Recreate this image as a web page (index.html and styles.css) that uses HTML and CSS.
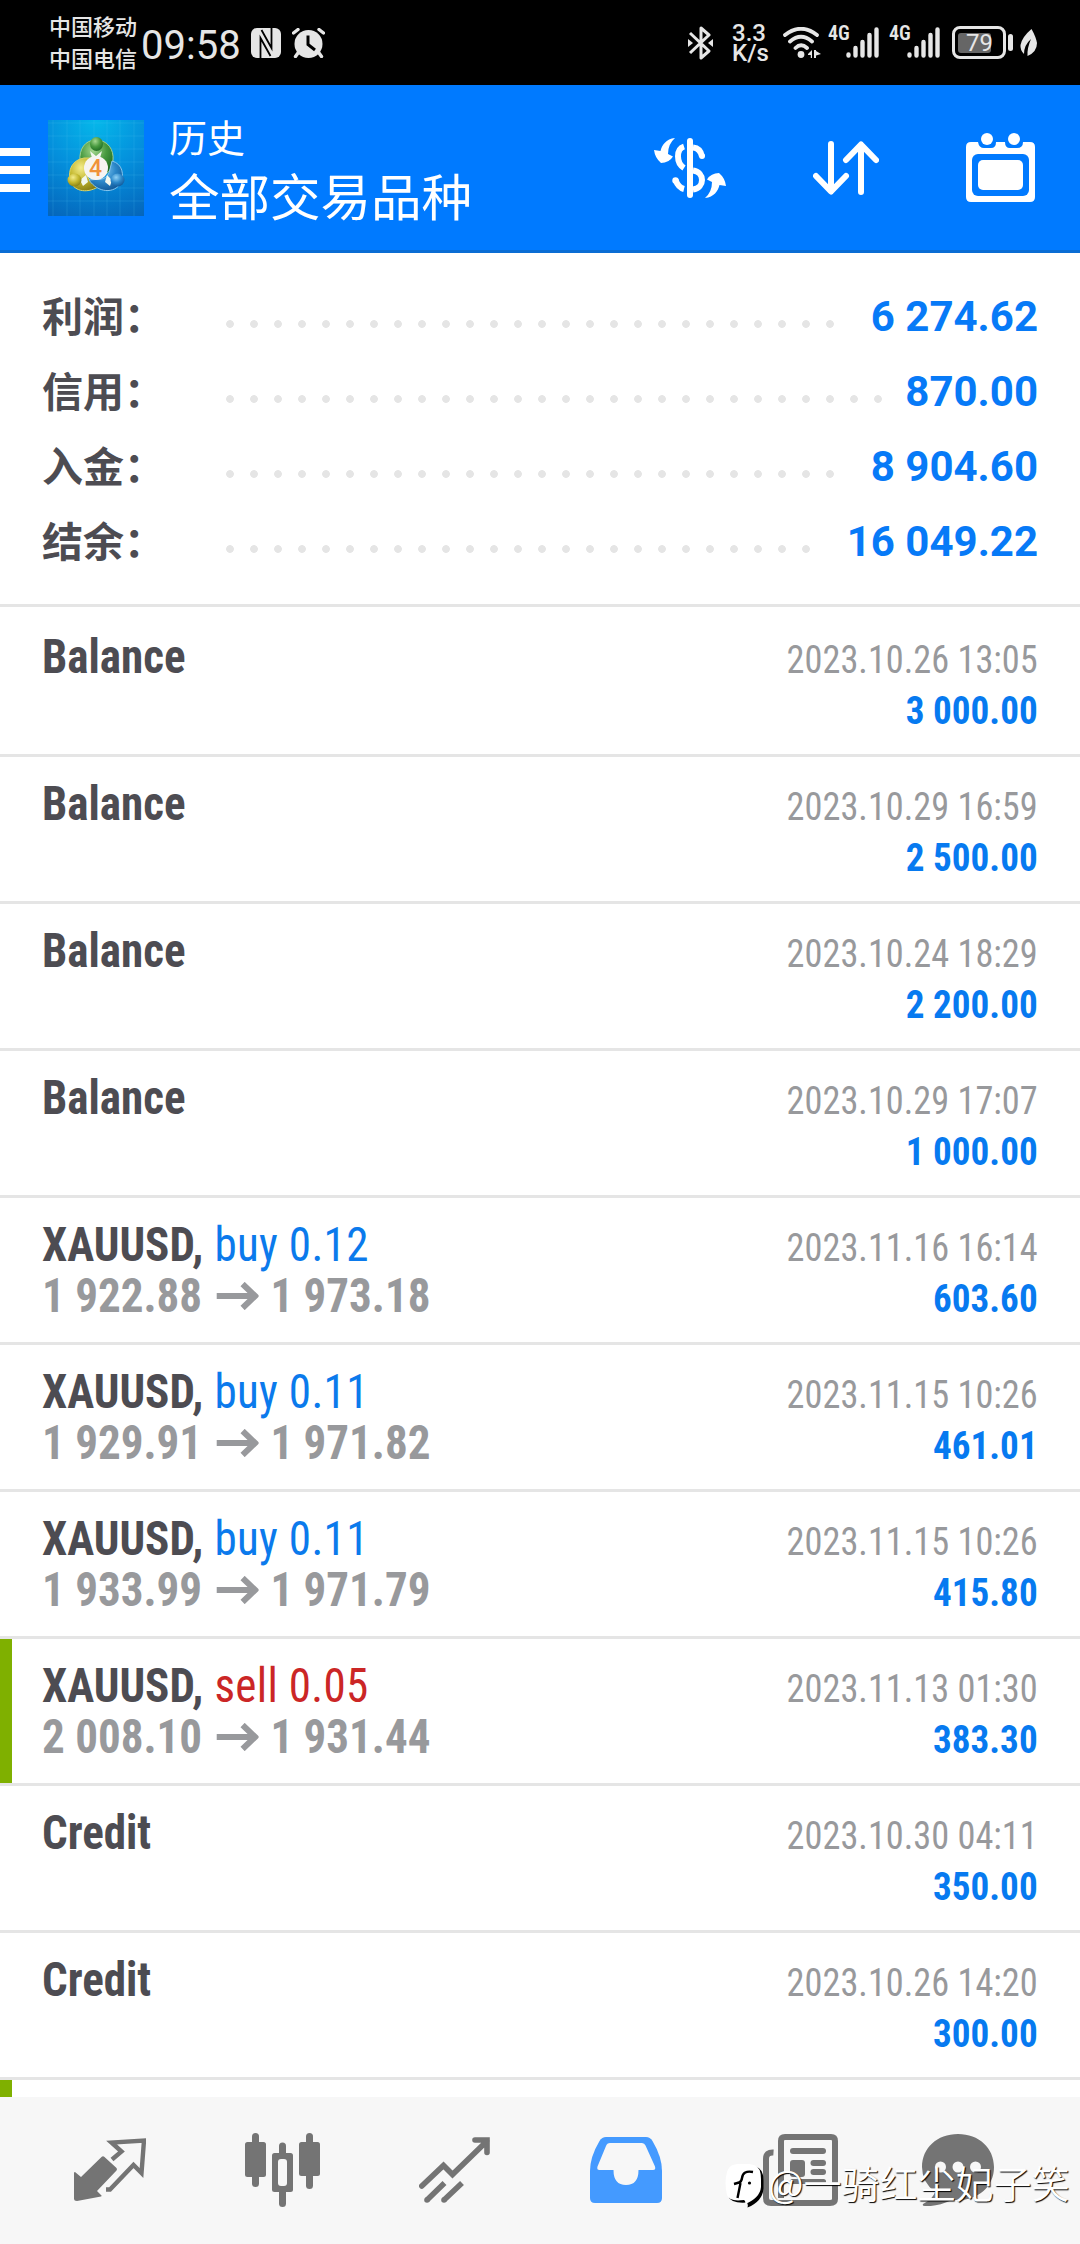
FILE: index.html
```
<!DOCTYPE html>
<html lang="zh-CN">
<head>
  <meta charset="UTF-8" />
  <meta name="viewport" content="width=device-width, initial-scale=1.0" />
  <title>历史 - 全部交易品种</title>
  <link rel="stylesheet" href="styles.css">
</head>
<body>
  <!-- Status bar -->
  <div class="status-bar">
    <div class="carriers">
      <span>中国移动</span>
      <span>中国电信</span>
    </div>
    <span class="clock">09:58</span>
    <svg class="nfc" width="30" height="30" viewBox="0 0 30 30">
      <rect width="30" height="30" rx="6" fill="#e6e6e6"/>
      <path d="M9.500 30V10L19.500 28M20.500 0V20L10.500 2" fill="none" stroke="#000" stroke-width="1.800"/>
    </svg>
    <svg class="alarm" width="33" height="30" viewBox="0 0 33 30">
      <circle cx="16.500" cy="16" r="14" fill="#e6e6e6"/>
      <path d="M1.500 5L6 1.500M31.500 5L27 1.500M6 25L3.500 28.500M27 25L29.500 28.500" stroke="#e6e6e6" stroke-width="3.400" stroke-linecap="round"/>
      <path d="M16 7.500V16.500L23 22" fill="none" stroke="#000" stroke-width="3"/>
    </svg>
    <div class="status-right">
      <svg class="bluetooth" width="25" height="34" viewBox="0 0 25 34">
        <path d="M2 7L21 25L13 32V2L21 9L2 27" fill="none" stroke="#e6e6e6" stroke-width="3" stroke-linejoin="round"/>
        <path d="M0 13L5 17L0 21ZM25 13L20 17L25 21Z" fill="#e6e6e6"/>
      </svg>
      <div class="net-speed">
        <span>3.3</span>
        <span>K/s</span>
      </div>
      <svg class="wifi" width="39" height="31" viewBox="0 0 39 31">
        <path d="M2 8Q18 -4.500 34 8M7 14.500Q18 5 29 14.500M12.500 21Q18 15.500 24 21" fill="none" stroke="#e6e6e6" stroke-width="3.800" stroke-linecap="round"/>
        <circle cx="18" cy="27.500" r="3.400" fill="#e6e6e6"/>
        <path d="M25 27L29 23V31H27.800V28H25ZM31 23V31H33V28.500L38 27L33 24V23Z" fill="#e6e6e6"/>
      </svg>
      <div class="signal">
        <span>4G</span>
        <svg width="34" height="31" viewBox="0 0 34 31">
          <path d="M3.500 27.500V28.500M10.500 21V28.500M17.500 15V28.500M24.500 8V28.500M31.500 2.500V28.500" stroke="#e6e6e6" stroke-width="4.400" stroke-linecap="round"/>
        </svg>
      </div>
      <div class="signal">
        <span>4G</span>
        <svg width="34" height="31" viewBox="0 0 34 31">
          <path d="M3.500 27.500V28.500M10.500 21V28.500M17.500 15V28.500M24.500 8V28.500M31.500 2.500V28.500" stroke="#e6e6e6" stroke-width="4.400" stroke-linecap="round"/>
        </svg>
      </div>
      <div class="battery"><div class="battery-level"></div><span>79</span></div>
      <div class="battery-tip"></div>
      <svg class="leaf" width="17" height="28" viewBox="0 0 17 28">
        <path d="M11.500 0Q16 8 17 14Q17 23 7.500 27Q7 19 11 10Q4 16 4 25Q0 21 0.500 16Q2 8 11.500 0Z" fill="#e6e6e6"/>
      </svg>
    </div>
  </div>

  <!-- Header -->
  <header class="header">
    <div class="menu">
      <span></span>
      <span></span>
      <span></span>
    </div>
    <svg class="logo" width="96" height="96" viewBox="0 0 96 96">
      <defs>
        <radialGradient id="sky" cx="0.5" cy="0" r="1.1">
          <stop offset="0" stop-color="#05b8ea"/>
          <stop offset="0.5" stop-color="#048fdc"/>
          <stop offset="1" stop-color="#0566bb"/>
        </radialGradient>
        <radialGradient id="green" cx="0.4" cy="0.3" r="0.8">
          <stop offset="0" stop-color="#a5d890"/>
          <stop offset="0.5" stop-color="#47993f"/>
          <stop offset="1" stop-color="#17631f"/>
        </radialGradient>
        <radialGradient id="yellow" cx="0.4" cy="0.3" r="0.8">
          <stop offset="0" stop-color="#f3ec8b"/>
          <stop offset="0.5" stop-color="#c3b72d"/>
          <stop offset="1" stop-color="#7b7312"/>
        </radialGradient>
        <radialGradient id="blue" cx="0.4" cy="0.3" r="0.8">
          <stop offset="0" stop-color="#8fd0f5"/>
          <stop offset="0.5" stop-color="#2b87c9"/>
          <stop offset="1" stop-color="#0c4f8f"/>
        </radialGradient>
      </defs>
      <rect width="96" height="96" fill="url(#sky)"/>
      <path d="M5 0V96M19 0V96M32 0V96M46 0V96M59 0V96M72 0V96M86 0V96M0 3H96M0 16H96M0 29H96M0 42H96M0 55H96M0 68H96M0 81H96" stroke="#5cc8f5" stroke-opacity="0.18"/>
      <path d="M48 20C60 20 66 30 65 40Q64 50 58 54L54 40Q48 34 41 40L32 41C31 29 37 20 48 20Z" fill="url(#green)" stroke="#9fd08f" stroke-width="1"/>
      <path d="M36 38C24 40 20 50 22 60C25 71 38 74 50 67L40 58L38 48L44 38Z" fill="url(#yellow)" stroke="#ddd565" stroke-width="1"/>
      <path d="M64 41C75 44 76 55 73 63C66 74 50 73 41 60L54 59Q61 57 62 49Z" fill="url(#blue)" stroke="#86c6ee" stroke-width="1"/>
      <path d="M42 31L48 36L54 31L52 38H44ZM32 60L38 55L40 62L35 66ZM64 60L59 55L57 62L62 66Z" fill="#f2f7ee"/>
      <ellipse cx="48.500" cy="24" rx="6.500" ry="7" fill="url(#green)"/>
      <ellipse cx="26.500" cy="60" rx="7" ry="6.500" fill="url(#yellow)"/>
      <ellipse cx="69.500" cy="60" rx="7" ry="6.500" fill="url(#blue)"/>
      <circle cx="48" cy="48" r="12" fill="#f6f4f2"/>
      <text class="logo-number" x="47.500" y="56" text-anchor="middle">4</text>
    </svg>
    <div class="titles">
      <div class="title-small">历史</div>
      <div class="title-large">全部交易品种</div>
    </div>
    <div class="actions">
      <svg width="72" height="60" viewBox="0 0 72 60">
        <g fill="none" stroke="#fff" stroke-width="6">
          <path d="M36 3V57" stroke-linecap="round"/>
          <path d="M30 8.500C22 11 22 25 30 30M39 9.500C44 10 47 13 48 18.500M39 32.500C51 34 51 50 39 51.500"/>
          <path d="M30 51C26 50 23 46 21.500 42"/>
        </g>
        <circle cx="48" cy="18" r="3" fill="#fff"/>
        <circle cx="21.500" cy="42.500" r="3.200" fill="#fff"/>
        <path id="turn" d="M21 0C12 1 8 7 6.500 13L0 12Q1 20 7 25Q15 25 19 18.500L14 16Q14 6 21 0Z" fill="#fff"/>
        <use href="#turn" transform="rotate(180 36 30)"/>
      </svg>
      <svg width="66" height="54" viewBox="0 0 66 54">
        <path d="M18 3V50M3 35L18 50.500L33 35M48 51V4M33 19L48 3.500L63 19" fill="none" stroke="#fff" stroke-width="6" stroke-linecap="round" stroke-linejoin="round"/>
      </svg>
      <svg width="69" height="69" viewBox="0 0 69 69">
        <path d="M5 9H12Q13 15 18 15H25Q30 15 30 9H39Q39 15 44 15H51Q57 15 57 9H64Q69 9 69 14V64Q69 69 64 69H5Q0 69 0 64V14Q0 9 5 9Z" fill="#fff"/>
        <circle cx="21" cy="6" r="6" fill="#fff"/>
        <circle cx="48" cy="6" r="6" fill="#fff"/>
        <rect x="6" y="21" width="57" height="42" rx="6" fill="#007aff"/>
        <rect x="12" y="27" width="45" height="30" rx="5" fill="#fff"/>
      </svg>
    </div>
  </header>

  <!-- Account totals -->
  <section class="summary">
    <div class="summary-row"><span class="summary-label">利润：</span><div class="dots"></div><span class="summary-value">6 274.62</span></div>
    <div class="summary-row"><span class="summary-label">信用：</span><div class="dots"></div><span class="summary-value">870.00</span></div>
    <div class="summary-row"><span class="summary-label">入金：</span><div class="dots"></div><span class="summary-value">8 904.60</span></div>
    <div class="summary-row"><span class="summary-label">结余：</span><div class="dots"></div><span class="summary-value">16 049.22</span></div>
  </section>

  <!-- History list -->
  <main class="history">
    <div class="deal">
      <div class="deal-left"><div><b>Balance</b></div></div>
      <div class="deal-right"><div class="date">2023.10.26 13:05</div><div class="amount">3 000.00</div></div>
    </div>
    <div class="deal">
      <div class="deal-left"><div><b>Balance</b></div></div>
      <div class="deal-right"><div class="date">2023.10.29 16:59</div><div class="amount">2 500.00</div></div>
    </div>
    <div class="deal">
      <div class="deal-left"><div><b>Balance</b></div></div>
      <div class="deal-right"><div class="date">2023.10.24 18:29</div><div class="amount">2 200.00</div></div>
    </div>
    <div class="deal">
      <div class="deal-left"><div><b>Balance</b></div></div>
      <div class="deal-right"><div class="date">2023.10.29 17:07</div><div class="amount">1 000.00</div></div>
    </div>
    <div class="deal">
      <div class="deal-left">
        <div><b>XAUUSD,</b> <span class="buy">buy 0.12</span></div>
        <div class="prices">1 922.88<svg class="arrow" viewBox="0 0 42 28" preserveAspectRatio="none"><path d="M0 14H38M26 2L38.500 14L26 26" fill="none" stroke="#98999c" stroke-width="6"/></svg>1 973.18</div>
      </div>
      <div class="deal-right"><div class="date">2023.11.16 16:14</div><div class="amount">603.60</div></div>
    </div>
    <div class="deal">
      <div class="deal-left">
        <div><b>XAUUSD,</b> <span class="buy">buy 0.11</span></div>
        <div class="prices">1 929.91<svg class="arrow" viewBox="0 0 42 28" preserveAspectRatio="none"><path d="M0 14H38M26 2L38.500 14L26 26" fill="none" stroke="#98999c" stroke-width="6"/></svg>1 971.82</div>
      </div>
      <div class="deal-right"><div class="date">2023.11.15 10:26</div><div class="amount">461.01</div></div>
    </div>
    <div class="deal">
      <div class="deal-left">
        <div><b>XAUUSD,</b> <span class="buy">buy 0.11</span></div>
        <div class="prices">1 933.99<svg class="arrow" viewBox="0 0 42 28" preserveAspectRatio="none"><path d="M0 14H38M26 2L38.500 14L26 26" fill="none" stroke="#98999c" stroke-width="6"/></svg>1 971.79</div>
      </div>
      <div class="deal-right"><div class="date">2023.11.15 10:26</div><div class="amount">415.80</div></div>
    </div>
    <div class="deal marked">
      <div class="deal-left">
        <div><b>XAUUSD,</b> <span class="sell">sell 0.05</span></div>
        <div class="prices">2 008.10<svg class="arrow" viewBox="0 0 42 28" preserveAspectRatio="none"><path d="M0 14H38M26 2L38.500 14L26 26" fill="none" stroke="#98999c" stroke-width="6"/></svg>1 931.44</div>
      </div>
      <div class="deal-right"><div class="date">2023.11.13 01:30</div><div class="amount">383.30</div></div>
    </div>
    <div class="deal">
      <div class="deal-left"><div><b>Credit</b></div></div>
      <div class="deal-right"><div class="date">2023.10.30 04:11</div><div class="amount">350.00</div></div>
    </div>
    <div class="deal">
      <div class="deal-left"><div><b>Credit</b></div></div>
      <div class="deal-right"><div class="date">2023.10.26 14:20</div><div class="amount">300.00</div></div>
    </div>
    <div class="deal marked"></div>
  </main>

  <!-- Bottom tabs -->
  <nav class="tabs">
    <svg width="72" height="63" viewBox="0 0 72 63">
      <path d="M1 34L7 39L27.500 19Q29 17.500 30.500 19L42.500 30Q43.500 31 42.500 32.500L23 53L27.500 57.500Q28 58 27 58.500L3 63Q0 63 0 60.500V34.500Z" fill="#747474"/>
      <path d="M32 51.500H36L59.500 27L67.500 35L70 2.500L37.500 4.500L47.500 13.500L38 21.500" fill="none" stroke="#747474" stroke-width="4.400"/>
    </svg>
    <svg width="75" height="74" viewBox="0 0 75 74">
      <g fill="#747474">
        <rect x="7" width="7" height="54" rx="3.500"/>
        <rect y="9" width="21" height="35" rx="2.500"/>
        <rect x="61" width="7" height="56" rx="3.500"/>
        <rect x="54" y="9" width="21" height="34" rx="2.500"/>
        <rect x="34" y="9.500" width="7" height="64.500" rx="3.500"/>
        <rect x="27" y="20" width="21" height="39" rx="2.500"/>
      </g>
      <rect x="33" y="26" width="9" height="27" rx="3" fill="#f7f7f7"/>
    </svg>
    <svg width="71" height="66" viewBox="0 0 71 66">
      <path d="M2.800 49L24.500 28.500L33.500 37.500L68 4M56 3H68V15.500" fill="none" stroke="#747474" stroke-width="5.600" stroke-linecap="round"/>
      <path d="M8 63L25.500 46M25 63L43 46" stroke="#747474" stroke-width="5.600"/>
      <circle cx="8" cy="63" r="2.800" fill="#747474"/>
      <circle cx="25" cy="63" r="2.800" fill="#747474"/>
    </svg>
    <svg width="72" height="66" viewBox="0 0 72 66">
      <path d="M16 0H56Q60 0 62.500 4Q72 20 72 34V61Q72 66 67 66H5Q0 66 0 61V34Q0 20 9.500 4Q12 0 16 0Z" fill="#449aff"/>
      <path d="M20 6H52Q54.500 6 55.500 8.500L65 29.500Q66 33 63 33H48.500Q48.500 48 36 48Q23.500 48 23.500 33H9.500Q6.500 33 7.500 29.500L16 9Q17 6 20 6Z" fill="#f7f7f7"/>
    </svg>
    <svg width="75" height="72" viewBox="0 0 75 72">
      <path d="M10.500 18.500Q3 18 3 25V64Q3 69 8 69H67Q72 69 72 65V7Q72 3 68 3H22Q18 3 18 7V64" fill="none" stroke="#747474" stroke-width="6"/>
      <g fill="#747474">
        <rect x="27" y="14" width="36" height="6" rx="3"/>
        <rect x="27" y="26" width="15" height="17" rx="3"/>
        <rect x="47.500" y="26" width="15.500" height="6" rx="3"/>
        <rect x="47.500" y="35" width="15.500" height="6" rx="3"/>
        <rect x="27" y="45" width="36" height="5" rx="2.500"/>
      </g>
    </svg>
    <svg width="72" height="72" viewBox="0 0 72 72">
      <path d="M36 0C57 0 72 14 72 33C72 53 56 66 36 66H30Q14 73 3 72Q0 72 1 70Q11 65 13 58Q0 48 0 33C0 14 15 0 36 0Z" fill="#747474"/>
      <g fill="#f7f7f7">
        <circle cx="18.500" cy="33" r="5.500"/>
        <circle cx="36" cy="33" r="5.500"/>
        <circle cx="53.500" cy="33" r="5.500"/>
      </g>
    </svg>
  </nav>

  <!-- Watermark -->
  <div class="watermark">
    <svg width="40" height="46" viewBox="0 0 40 46">
      <path d="M8 1Q18 -2 29 1Q37 3 37 15V23Q36 36 21 42Q22 38 20 37Q4 38 2 31Q-1 18 2 8Q4 2 8 1Z" fill="#000" transform="translate(1.500 1.500)"/>
      <path d="M8 1Q18 -2 29 1Q36 3 36 15V23Q35 34 20 40Q21 37 19 36Q4 38 2 31Q-1 18 2 8Q4 2 8 1Z" fill="#fff"/>
      <path d="M28 8Q18 6 17 14Q16.500 18 14 18.500L9 20M15.500 19L12.500 34" fill="none" stroke="#000" stroke-width="2.400"/>
      <circle cx="24.500" cy="19" r="1.600" fill="#000"/>
    </svg>
    <span>@一骑红尘妃子笑</span>
  </div>
</body>
</html>
```
FILE: styles.css
```
/* Base styles */
* {
  box-sizing: border-box;
}
body {
  width: 1080px;
  height: 2244px;
  margin: 0;
  display: flex;
  flex-direction: column;
  overflow: hidden;
  background-color: #fff;
  font-family: Roboto, "Noto Sans CJK SC", sans-serif;
}
svg {
  display: block;
  flex: none;
}
/* Status bar */
.status-bar {
  flex: none;
  height: 85px;
  display: flex;
  align-items: center;
  padding-left: 49px;
  background-color: #000;
  color: #e6e6e6;
}
.carriers {
  display: flex;
  flex-direction: column;
  width: 92px;
  padding-top: 2px;
  font-size: 22px;
  font-weight: 500;
  line-height: 32px;
}
.clock {
  width: 110px;
  padding-top: 6px;
  font-size: 40px;
  line-height: 46px;
}
.alarm {
  margin-left: 11px;
}
.status-right {
  margin-left: auto;
  padding-right: 43px;
  display: flex;
  align-items: center;
}
.net-speed {
  display: flex;
  flex-direction: column;
  width: 51px;
  margin-left: 19px;
  font-size: 24px;
  font-weight: 500;
  line-height: 20px;
}
.signal {
  display: flex;
  width: 55px;
  margin-left: 6px;
  font-family: "Roboto Condensed", sans-serif;
  font-size: 20px;
  font-weight: 600;
  line-height: 12px;
}
.signal span {
  width: 17px;
}
.battery {
  display: flex;
  align-items: center;
  width: 54px;
  height: 33px;
  margin-left: 8px;
  padding-left: 3px;
  border: 3px solid #e6e6e6;
  border-radius: 8px;
}
.battery-level {
  width: 33px;
  height: 20px;
  margin-right: -25px;
  border-radius: 3px;
  background-color: #666;
}
.battery span {
  position: relative;
  font-size: 24px;
  line-height: 24px;
}
.battery-tip {
  width: 5px;
  height: 17px;
  margin: 0 7px 0 2px;
  border-radius: 3px;
  background-color: #e6e6e6;
}
/* Header */
.header {
  flex: none;
  height: 168px;
  display: flex;
  align-items: center;
  padding-right: 45px;
  border-bottom: 3px solid #0a6dd4;
  background-color: #007aff;
  color: #fff;
}
.menu {
  width: 30px;
  margin: 4px 18px 0 0;
  display: flex;
  flex-direction: column;
  gap: 10px;
}
.menu span {
  height: 8px;
  background-color: #fff;
}
.logo-number {
  fill: #f0923a;
  font-size: 23px;
  font-weight: 500;
}
.titles {
  margin: 8px 0 0 25px;
}
.title-small {
  font-size: 38px;
  line-height: 54px;
}
.title-large {
  font-size: 50.5px;
  line-height: 66px;
}
.actions {
  margin-left: auto;
  display: flex;
  align-items: center;
  gap: 87px;
}
/* Account totals */
.summary {
  flex: none;
  padding: 26px 42px 25px;
  border-bottom: 3px solid #e5e5e5;
}
.summary-row {
  display: flex;
  align-items: center;
  height: 75px;
}
.summary-label {
  width: 176px;
  padding-bottom: 4px;
  color: #4d4c52;
  font-family: "Noto Sans CJK SC", sans-serif;
  font-size: 41px;
  font-weight: bold;
  line-height: 71px;
}
.summary-value {
  margin-left: 12px;
  color: #077af7;
  font-size: 42px;
  font-weight: 700;
}
.dots {
  flex: 1;
  padding-top: 15px;
}
.dots::before {
  content: "";
  display: block;
  width: round(down, 100%, 24px); /* whole dots only */
  height: 8px;
  background: radial-gradient(circle, #e5e5e5 3.5px, transparent 4.2px) 0 0 / 24px 8px;
}
/* History list */
.history {
  flex: 1;
  min-height: 0;
  padding-top: 3px;
  overflow: hidden;
  font-family: "Roboto Condensed", sans-serif;
}
.deal {
  display: flex;
  justify-content: space-between;
  height: 147px;
  padding: 21px 42px 0;
  border-bottom: 3px solid #e5e5e5;
  line-height: 51px;
}
.marked {
  background: linear-gradient(#7fb000, #7fb000) no-repeat 0 0 / 12px 100%;
}
.deal-left {
  color: #4d4c52;
  font-size: 48px;
  transform: scaleX(0.938);
  transform-origin: left;
}
.deal-right {
  padding-top: 4px;
  font-size: 39px;
  text-align: right;
}
.date {
  color: #98999c;
  transform: scaleX(0.931);
  transform-origin: right;
}
.amount {
  color: #077af0;
  font-weight: bold;
  transform: scaleX(0.952);
  transform-origin: right;
}
.prices {
  display: flex;
  align-items: center;
  color: #98999c;
  font-weight: bold;
}
.arrow {
  width: 45px;
  height: 28px;
  margin: 1px 13px 0 15px;
}
.buy, .sell {
  margin-left: 1px;
  letter-spacing: 0.35px;
}
.buy {
  color: #0b7aec;
}
.sell {
  color: #cb2626;
}
/* Bottom tabs */
.tabs {
  flex: none;
  height: 147px;
  display: grid;
  grid-template-columns: repeat(4, 172px) 176px 140px;
  align-items: center;
  justify-items: center;
  justify-content: start;
  padding: 0 0 2px 24px;
  background-color: #f7f7f7;
}
/* Watermark over the tabs */
.watermark {
  position: absolute;
  left: 725px;
  top: 2164px;
  display: flex;
  align-items: flex-start;
  gap: 3px;
  color: #fff;
  font-family: "Noto Sans CJK SC", sans-serif;
  font-size: 38px;
  font-weight: 350;
  line-height: 36px;
  text-shadow: 1px 1px 1px #000;
  white-space: nowrap;
}
```
